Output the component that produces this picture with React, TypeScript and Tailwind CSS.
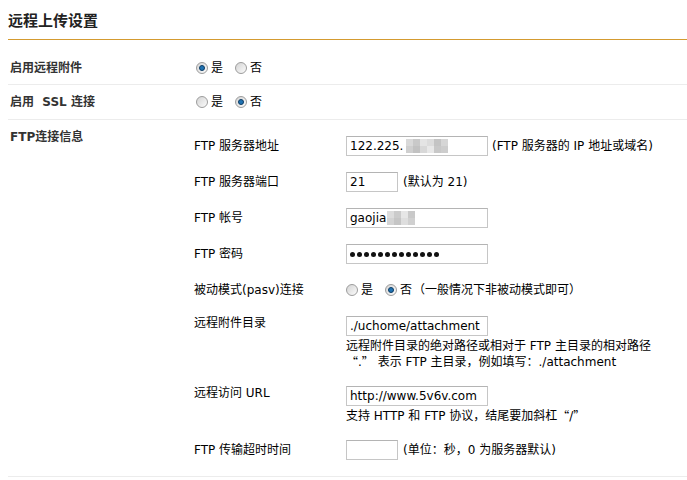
import React from "react";

const latin = "font-['DejaVu_Sans','Noto_Sans_CJK_SC',sans-serif]";

function Radio({ checked }: { checked?: boolean }) {
  return (
    <span className="inline-flex h-[12px] w-[12px] shrink-0 items-center justify-center rounded-full border border-[#9c9c9c] bg-linear-to-br from-[#d4d4d4] to-[#fbfbfb]">
      {checked && <span className="h-[6px] w-[6px] rounded-full border border-[#0d3b63] bg-[#1f73b3]" />}
    </span>
  );
}

function YesNo({ yes, note }: { yes: boolean; note?: string }) {
  return (
    <div className="flex h-5 items-center">
      <Radio checked={yes} />
      <span className="ml-[3px]">是</span>
      <span className="ml-[12px] flex">
        <Radio checked={!yes} />
      </span>
      <span className="ml-[3px]">否</span>
      {note && <span className="ml-[1px]">{note}</span>}
    </div>
  );
}

// pixelated blur over hidden chars
function Mosaic({ cells }: { cells: string[][] }) {
  return (
    <span className="inline-flex flex-col">
      {cells.map((row, i) => (
        <span key={i} className="flex">
          {row.map((c, j) => (
            <span key={j} className="h-[7px] w-[7px]" style={{ background: c }} />
          ))}
        </span>
      ))}
    </span>
  );
}

function Box({ w, children }: { w: string; children?: React.ReactNode }) {
  return (
    <div className={`flex h-[20px] ${w} items-center overflow-hidden whitespace-nowrap border border-[#c6c6c6] border-t-[#b4b4b4] bg-white px-[3px] text-[12px] leading-[14px] text-[#000]`}>
      {children}
    </div>
  );
}

function Row({ label, children }: { label: string; children: React.ReactNode }) {
  return (
    <div className="flex h-[36px] items-center">
      <div className="w-[152px] shrink-0">{label}</div>
      <div className="flex-1">{children}</div>
    </div>
  );
}

function TopRow({ label, children }: { label: string; children: React.ReactNode }) {
  return (
    <div className="flex items-start py-2">
      <div className="h-[14px] w-[152px] shrink-0 leading-[14px]">{label}</div>
      <div className="flex-1">{children}</div>
    </div>
  );
}

function Help({ children }: { children: React.ReactNode }) {
  return <div className="flex h-[16px] items-center whitespace-pre leading-[16px]">{children}</div>;
}

// full-width CJK quotes
function LQ() {
  return <span className="inline-block w-[12px] text-right font-['Noto_Sans_CJK_SC',sans-serif]">“</span>;
}
function RQ() {
  return <span className="inline-block w-[12px] text-left font-['Noto_Sans_CJK_SC',sans-serif]">”</span>;
}

export default function App() {
  return (
    <div className={`min-h-screen bg-white pl-2 pt-[11px] text-[12px] leading-[16px] text-[#000] ${latin}`}>
      <h3 className="h-[29px] border-b border-[#d49b30] pt-[1px] text-[15px] font-bold leading-[18px] text-[#222]">
        远程上传设置
      </h3>

      <div className="mt-[11px]">
        {/* 启用远程附件 */}
        <div className="flex h-[34px] items-center border-b border-[#ececec]">
          <div className="w-[186px] shrink-0 pl-[2px] font-bold text-[#333]">启用远程附件</div>
          <div className="flex-1 pl-[2px]">
            <YesNo yes />
          </div>
        </div>

        {/* SSL */}
        <div className="flex h-[35px] items-center border-b border-[#ececec]">
          <div className="w-[186px] shrink-0 whitespace-pre pl-[2px] font-bold text-[#333]">启用  SSL 连接</div>
          <div className="flex-1 pl-[2px]">
            <YesNo yes={false} />
          </div>
        </div>

        {/* FTP */}
        <div className="flex border-b border-[#ececec]">
          <div className="h-[25px] w-[186px] shrink-0 pt-[9px] pl-[2px] font-bold text-[#333]">FTP连接信息</div>
          <div className="flex-1 py-2">
            <Row label="FTP 服务器地址">
              <div className="flex items-center">
                <Box w="w-[142px]">
                  <span>122.225.</span>
                  <span className="ml-[3px] flex">
                    <Mosaic
                      cells={[
                        ["#d9d9d9", "#c9c9c9", "#e4e4e4", "#dcdcdc", "#c4c4c4", "#d6d6d6"],
                        ["#cfcfcf", "#c2c2c2", "#d8d8d8", "#e8e8e8", "#c8c8c8", "#cdcdcd"],
                      ]}
                    />
                  </span>
                </Box>
                <span className="ml-[4px]">(FTP 服务器的 IP 地址或域名)</span>
              </div>
            </Row>

            <Row label="FTP 服务器端口">
              <div className="flex items-center">
                <Box w="w-[52px]">21</Box>
                <span className="ml-[5px]">(默认为 21)</span>
              </div>
            </Row>

            <Row label="FTP 帐号">
              <Box w="w-[142px]">
                <span>gaojia</span>
                <span className="ml-[1px] flex">
                  <Mosaic
                    cells={[
                      ["#dcdcdc", "#cbcbcb", "#e6e6e6", "#c9c9c9"],
                      ["#d3d3d3", "#c5c5c5", "#dedede", "#d0d0d0"],
                    ]}
                  />
                </span>
              </Box>
            </Row>

            <Row label="FTP 密码">
              <Box w="w-[142px]">
                <span className="flex gap-[2px]">
                  {Array.from({ length: 13 }).map((_, i) => (
                    <span key={i} className="h-[5px] w-[5px] rounded-full bg-[#111]" />
                  ))}
                </span>
              </Box>
            </Row>

            <Row label="被动模式(pasv)连接">
              <YesNo yes={false} note="（一般情况下非被动模式即可）" />
            </Row>

            <TopRow label="远程附件目录">
              <Box w="w-[142px]">./uchome/attachment</Box>
              <div className="mt-[2px]">
                <Help>远程附件目录的绝对路径或相对于 FTP 主目录的相对路径</Help>
                <Help>
                  <LQ />.<RQ /> 表示 FTP 主目录，例如填写：./attachment
                </Help>
              </div>
            </TopRow>

            <TopRow label="远程访问 URL">
              <Box w="w-[142px]">http://www.5v6v.com</Box>
              <div className="mt-[2px]">
                <Help>
                  支持 HTTP 和 FTP 协议，结尾要加斜杠<LQ />/<RQ />
                </Help>
              </div>
            </TopRow>

            <Row label="FTP 传输超时时间">
              <div className="flex items-center">
                <Box w="w-[52px]" />
                <span className="ml-[5px]">(单位：秒，0 为服务器默认)</span>
              </div>
            </Row>
          </div>
        </div>
      </div>
    </div>
  );
}
